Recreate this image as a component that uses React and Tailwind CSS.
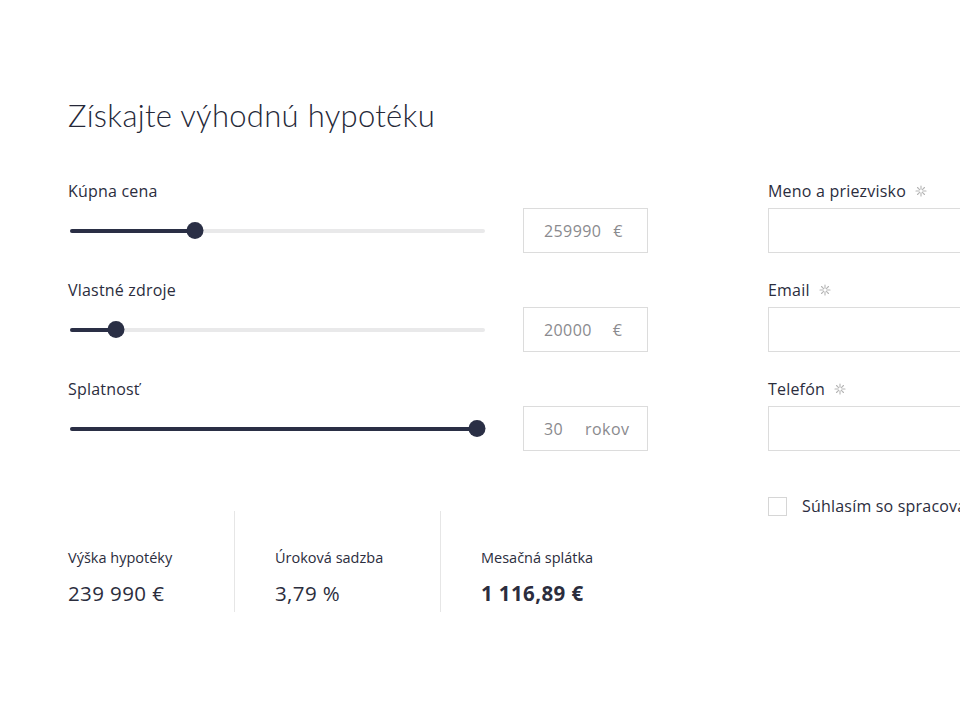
import React from "react";

const body = { fontFamily: "'Open Sans', 'Noto Sans', sans-serif" };

function Star() {
  return (
    <svg width="12" height="12" viewBox="0 0 12 12" className="ml-[9px] inline-block" aria-hidden="true">
      <g stroke="#b5b5b5" strokeWidth="1.1" strokeLinecap="round">
        <line x1="6" y1="1" x2="6" y2="4.2" />
        <line x1="6" y1="7.8" x2="6" y2="11" />
        <line x1="1" y1="6" x2="4.2" y2="6" />
        <line x1="7.8" y1="6" x2="11" y2="6" />
        <line x1="2.5" y1="2.5" x2="4.6" y2="4.6" />
        <line x1="7.4" y1="7.4" x2="9.5" y2="9.5" />
        <line x1="9.5" y1="2.5" x2="7.4" y2="4.6" />
        <line x1="4.6" y1="7.4" x2="2.5" y2="9.5" />
      </g>
    </svg>
  );
}

function Slider({ pct }) {
  return (
    <div className="relative h-4 w-[415px] flex items-center">
      <div className="h-[4px] w-full rounded-full bg-[#e9e9ea]" />
      <div
        className="absolute left-0 h-[4px] rounded-full bg-[#2a2f45]"
        style={{ width: `calc(8px + (100% - 16px) * ${pct / 100})` }}
      />
      <div
        className="absolute h-[17px] w-[17px] rounded-full bg-[#2a2f45] -translate-x-1/2"
        style={{ left: `calc(8px + (100% - 16px) * ${pct / 100})` }}
      />
    </div>
  );
}

function CalcRow({ label, value, unit, pct, unitGap }) {
  return (
    <div className="flex flex-col gap-[7px]">
      <div className="h-5 text-[16px] leading-5 tracking-[0.2px] text-[#2b2d3d]">{label}</div>
      <div className="flex items-center justify-between">
        <div className="pl-[2px]">
          <Slider pct={pct} />
        </div>
        <div className="flex h-[45px] w-[125px] items-center border border-[#dcdcdc] pl-[20px] text-[16px] tracking-[0.4px] text-[#8a8a8e]">
          <span>{value}</span>
          <span className={unitGap}>{unit}</span>
        </div>
      </div>
    </div>
  );
}

function Field({ label }) {
  return (
    <div className="flex flex-col gap-[7px]">
      <div className="flex h-5 items-center text-[16px] leading-5 tracking-[0.2px] text-[#2b2d3d]">
        {label}
        <Star />
      </div>
      <div className="h-[45px] w-[260px] border border-[#dcdcdc] bg-white" />
    </div>
  );
}

function Stat({ label, value, bold, first }) {
  return (
    <div className={`flex flex-col ${first ? "w-[166px]" : "w-[206px] border-l border-[#e6e6e6] pl-[40px]"} h-[101px] pt-[37px]`}>
      <div className="text-[14.5px] leading-5 text-[#2b2d3d]">{label}</div>
      <div className={`mt-[13px] text-[20.5px] leading-6 tracking-[0.4px] text-[#2b2d3d] ${bold ? "font-bold" : ""}`}>{value}</div>
    </div>
  );
}

export default function App() {
  return (
    <div className="h-[720px] w-[960px] overflow-hidden bg-white" style={body}>
      <div className="flex gap-[120px] pl-[68px] pt-[93px]">
        <div className="flex w-[580px] shrink-0 flex-col">
          <h1
            className="text-[31px] leading-[44px] tracking-[0.3px] text-[#252838]"
            style={{ fontFamily: "Lato, sans-serif", fontWeight: 300 }}
          >
            Získajte výhodnú hypotéku
          </h1>
          <div className="mt-[44px] flex flex-col gap-[27px]">
            <CalcRow label="Kúpna cena" value="259990" unit="€" pct={29.3} unitGap="ml-[12px]" />
            <CalcRow label="Vlastné zdroje" value="20000" unit="€" pct={9.5} unitGap="ml-[21px]" />
            <CalcRow label="Splatnosť" value="30" unit="rokov" pct={100} unitGap="ml-[22px]" />
          </div>
          <div className="mt-[60px] flex">
            <Stat first label="Výška hypotéky" value="239 990 €" />
            <Stat label="Úroková sadzba" value="3,79 %" />
            <Stat bold label="Mesačná splátka" value="1 116,89 €" />
          </div>
        </div>
        <div className="flex shrink-0 flex-col pt-[88px]">
          <div className="flex flex-col gap-[27px]">
            <Field label="Meno a priezvisko" />
            <Field label="Email" />
            <Field label="Telefón" />
          </div>
          <div className="mt-[43px] flex items-center gap-[15px]">
            <div className="h-[19px] w-[19px] border border-[#d6d6d6]" />
            <span className="whitespace-nowrap text-[16px] tracking-[0.2px] text-[#2b2d3d]">Súhlasím so spracovaním osobných údajov</span>
          </div>
        </div>
      </div>
    </div>
  );
}
